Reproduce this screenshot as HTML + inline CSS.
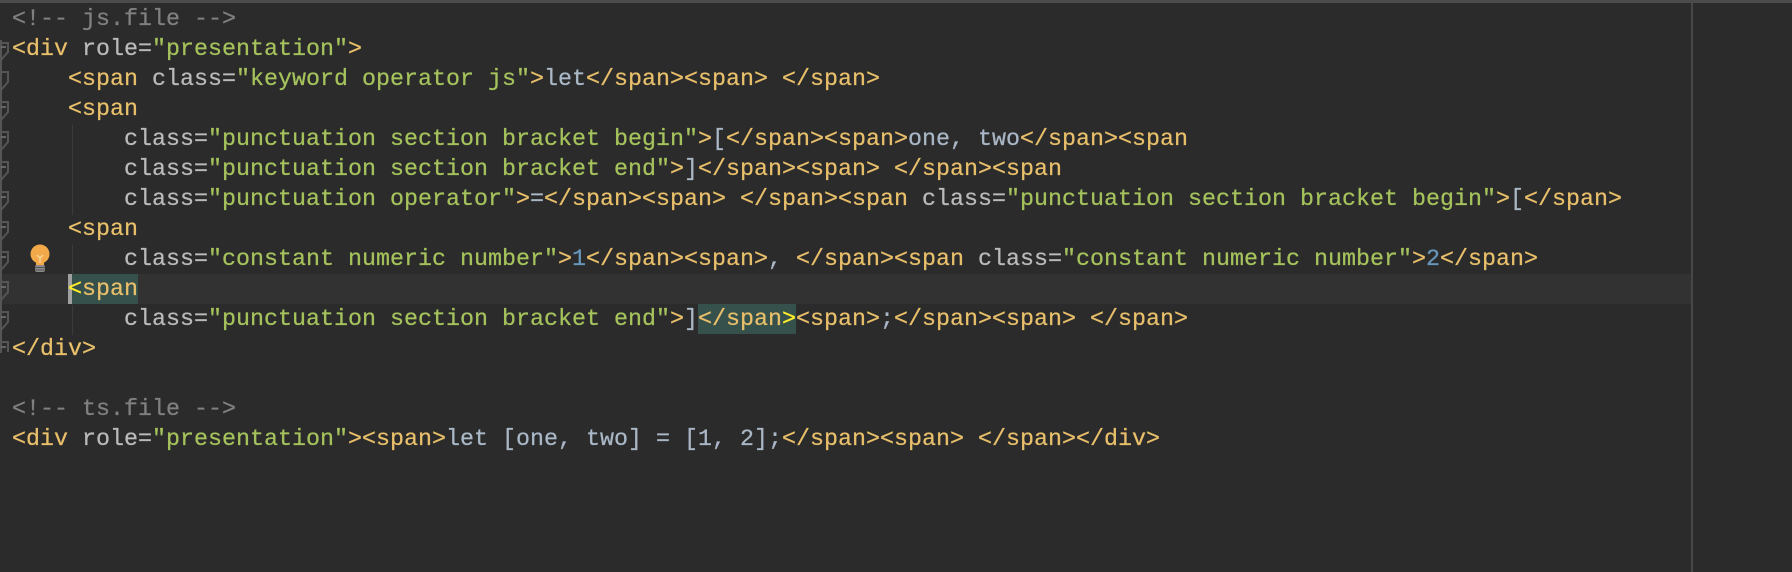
<!DOCTYPE html>
<html><head><meta charset="utf-8"><style>
html,body{margin:0;padding:0;background:#2b2b2b;width:1792px;height:572px;overflow:hidden;position:relative}
.top{position:absolute;left:0;top:0;width:1792px;height:3px;background:#4b4b4b}
.rdiv{position:absolute;left:1691px;top:3px;width:2px;height:569px;background:#474747}
.cur{position:absolute;left:0;top:274px;width:1691px;height:30px;background:#323232}
.hl{position:absolute;height:30px;background:#36504b}
.caret{position:absolute;left:68px;top:274px;width:4px;height:30px;background:#a0a0a0}
.guide{position:absolute;left:72px;width:1px;background:#3b3b3b}
pre{position:absolute;left:12px;top:5px;margin:0;font-family:"Liberation Mono",monospace;font-size:23.33px;line-height:30px;color:#a9b7c6;white-space:pre;-webkit-text-stroke:0.25px currentColor}
.t{color:#e8bf6a}.a{color:#bababa}.s{color:#a5c25c}.c{color:#808080}.n{color:#6897bb}.y{color:#ffef28}
</style></head><body>
<div class="top"></div>
<div class="cur"></div>
<div class="hl" style="left:68px;top:274px;width:70px"></div>
<div class="hl" style="left:698px;top:304px;width:98px"></div>
<div class="caret"></div>
<div class="guide" style="top:125px;height:90px"></div>
<div class="guide" style="top:245px;height:30px"></div>
<div class="guide" style="top:305px;height:30px"></div>
<div class="rdiv"></div>
<svg style="position:absolute;left:0;top:0" width="60" height="360">
<g fill="none" stroke="#555" stroke-width="2">
<path d="M1 40 V 353"/>
<path d="M1 102 H8 V112 L1 120 M1 132 H8 V142 L1 150 M1 162 H8 V172 L1 180 M1 192 H8 V202 L1 210 M1 222 H8 V232 L1 240 M1 252 H8 V262 L1 270 M1 282 H8 V292 L1 300 M1 312 H8 V322 L1 330 M1 342 H8 V352"/>
<path d="M1 43 H8 V52 L1 60 M1 72 H8 V82 L1 90"/>
</g>
<g stroke="#777" stroke-width="1.5"><path d="M1 47 H6 M1 107 H6 M1 137 H6 M1 167 H6 M1 197 H6 M1 227 H6 M1 257 H6 M1 287 H6 M1 317 H6 M1 347 H6"/></g>
<circle cx="40" cy="254" r="9.5" fill="#f2a94a"/>
<rect x="36" y="261" width="8" height="4" fill="#f2a94a"/>
<path d="M37 255 L40 258 L43 255 M40 258 V263" stroke="#f8d9a0" stroke-width="1.3" fill="none"/>
<rect x="35" y="265" width="10" height="7" rx="2" fill="#8a8a8a"/>
<path d="M35 267.5 H45 M35 270 H45" stroke="#555" stroke-width="1"/>
</svg>
<pre><span class="c">&lt;!-- js.file --&gt;</span>
<span class="t">&lt;div </span><span class="a">role=</span><span class="s">"presentation"</span><span class="t">&gt;</span>
    <span class="t">&lt;span </span><span class="a">class=</span><span class="s">"keyword operator js"</span><span class="t">&gt;</span>let<span class="t">&lt;/span&gt;&lt;span&gt;</span> <span class="t">&lt;/span&gt;</span>
    <span class="t">&lt;span</span>
        <span class="a">class=</span><span class="s">"punctuation section bracket begin"</span><span class="t">&gt;</span>[<span class="t">&lt;/span&gt;&lt;span&gt;</span>one, two<span class="t">&lt;/span&gt;&lt;span</span>
        <span class="a">class=</span><span class="s">"punctuation section bracket end"</span><span class="t">&gt;</span>]<span class="t">&lt;/span&gt;&lt;span&gt;</span> <span class="t">&lt;/span&gt;&lt;span</span>
        <span class="a">class=</span><span class="s">"punctuation operator"</span><span class="t">&gt;</span>=<span class="t">&lt;/span&gt;&lt;span&gt;</span> <span class="t">&lt;/span&gt;&lt;span </span><span class="a">class=</span><span class="s">"punctuation section bracket begin"</span><span class="t">&gt;</span>[<span class="t">&lt;/span&gt;</span>
    <span class="t">&lt;span</span>
        <span class="a">class=</span><span class="s">"constant numeric number"</span><span class="t">&gt;</span><span class="n">1</span><span class="t">&lt;/span&gt;&lt;span&gt;</span>, <span class="t">&lt;/span&gt;&lt;span </span><span class="a">class=</span><span class="s">"constant numeric number"</span><span class="t">&gt;</span><span class="n">2</span><span class="t">&lt;/span&gt;</span>
    <span class="y">&lt;</span><span class="t">span</span>
        <span class="a">class=</span><span class="s">"punctuation section bracket end"</span><span class="t">&gt;</span>]<span class="t">&lt;/span</span><span class="y">&gt;</span><span class="t">&lt;span&gt;</span>;<span class="t">&lt;/span&gt;&lt;span&gt;</span> <span class="t">&lt;/span&gt;</span>
<span class="t">&lt;/div&gt;</span>

<span class="c">&lt;!-- ts.file --&gt;</span>
<span class="t">&lt;div </span><span class="a">role=</span><span class="s">"presentation"</span><span class="t">&gt;&lt;span&gt;</span>let [one, two] = [1, 2];<span class="t">&lt;/span&gt;&lt;span&gt;</span> <span class="t">&lt;/span&gt;&lt;/div&gt;</span>
</pre>
</body></html>
